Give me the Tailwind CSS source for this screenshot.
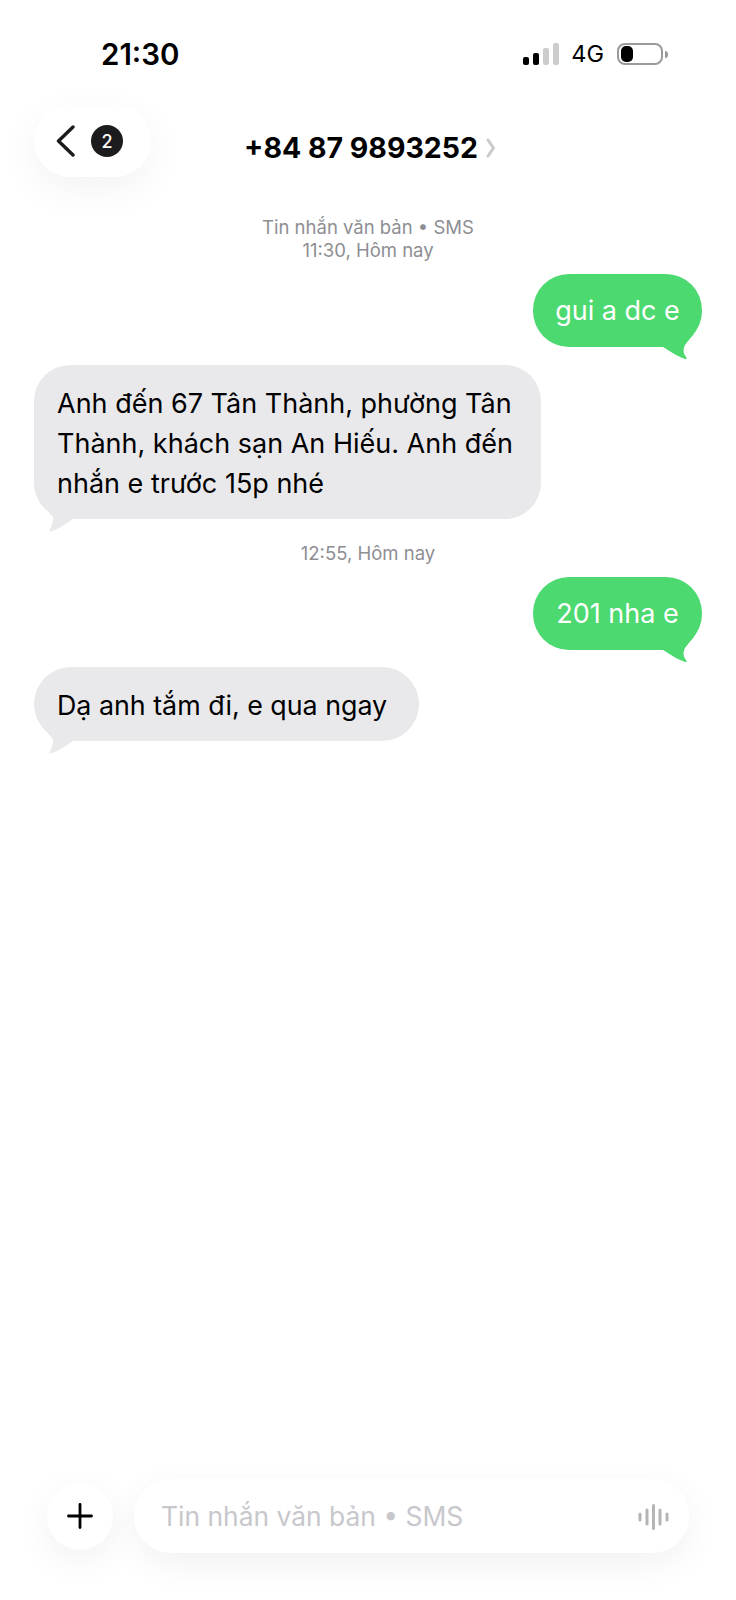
<!DOCTYPE html>
<html lang="vi">
<head>
    <meta charset="UTF-8">
    <meta name="viewport" content="width=device-width, initial-scale=1.0">
    <title>Tin nhắn</title>
    <script src="https://cdn.jsdelivr.net/npm/@tailwindcss/browser@4"></script>
</head>
<body class="bg-white font-['Inter','Noto_Sans',sans-serif] text-black">
<div class="flex h-[1600px] w-[736px] flex-col overflow-hidden bg-white">

    <!-- status bar -->
    <div class="flex h-[105px] items-start justify-between pl-[101px] pr-[68px] pt-[36px]">
        <span class="text-[29.500px] font-semibold leading-[36px]">21:30</span>
        <div class="flex h-[36px] items-center">
            <div class="flex items-end gap-[4px] pb-[1px]">
                <span class="h-[8px] w-[6px] rounded-[2px] bg-black"></span>
                <span class="h-[12px] w-[6px] rounded-[2px] bg-black"></span>
                <span class="h-[17px] w-[6px] rounded-[2px] bg-[#cccccc]"></span>
                <span class="h-[22px] w-[6px] rounded-[2px] bg-[#cccccc]"></span>
            </div>
            <span class="ml-[12px] text-[23.500px] leading-[36px]">4G</span>
            <div class="ml-[13px] flex h-[22px] w-[46px] items-center rounded-[8px] border-2 border-[#9a9a9a] pl-[2px]">
                <span class="h-[16px] w-[12px] rounded-[5px] bg-black"></span>
            </div>
            <span class="ml-[2px] h-[7px] w-[3px] rounded-r-[3px] bg-[#9a9a9a]"></span>
        </div>
    </div>

    <!-- nav -->
    <div class="grid h-[72px] grid-cols-[1fr_auto_1fr] items-start px-[34px]">
        <div class="flex h-[72px] w-[117px] items-center rounded-[36px] bg-white pl-[22px] shadow-[0_12px_40px_rgba(0,0,0,0.05)]">
            <svg class="h-[32px] w-[19px]" viewBox="0 0 19 32" fill="none" stroke="#1c1c1e" stroke-width="3.4" stroke-linecap="round" stroke-linejoin="round">
                <path d="M17 2 L2.5 16 L17 30"></path>
            </svg>
            <span class="ml-[16px] flex h-[32px] w-[32px] items-center justify-center rounded-full bg-[#1c1c1e] text-[18px] font-medium text-white">2</span>
        </div>
        <div class="flex items-center pl-[4px] pt-[25px]">
            <span class="text-[28.500px] font-bold leading-[36px]">+84 87 9893252</span>
            <svg class="ml-[8px] h-[20px] w-[10px]" viewBox="0 0 10 20" fill="none" stroke="#c9c9c9" stroke-width="3" stroke-linecap="round" stroke-linejoin="round">
                <path d="M2 2 L7.5 10 L2 18"></path>
            </svg>
        </div>
        <div></div>
    </div>

    <!-- messages -->
    <div class="flex flex-col px-[34px] pt-[39px]">
        <p class="text-center text-[18.500px] leading-[23px] text-[#8e8e93]">Tin nhắn văn bản • SMS<br>11:30, Hôm nay</p>

        <div class="relative mt-[12px] flex h-[73px] w-[169px] items-center justify-center self-end rounded-[36px] bg-[#4cd96f] pt-[2px] text-[27px] text-white">
            gui a dc e
            <svg class="absolute left-[128px] top-[60px] h-[27px] w-[36px]" viewBox="0 0 36 27" fill="#4cd96f">
                <path d="M2 13 C10 18 18 23 24 25 C26 25.500 26 24 25 23 C22 19 22 15 24 11 C27 7 30 3 33 0 L10 0 Z"></path>
            </svg>
        </div>

        <div class="relative mt-[18px] w-[507px] rounded-[36px] bg-[#e9e9eb] pb-[15px] pl-[23px] pt-[19px] text-[27px] leading-[40px]">
            <p>Anh đến 67 Tân Thành, phường Tân<br>Thành, khách sạn An Hiếu. Anh đến<br>nhắn e trước 15p nhé</p>
            <svg class="absolute left-[10px] top-[140px] h-[27px] w-[29px]" viewBox="0 0 29 27" fill="#e9e9eb">
                <path d="M0 0 C2 4 6 9 9 12 C9.500 16 8 21 5.500 25 C5 26.500 6.500 26.500 8 26 C15 24 23 18 29 14 L29 0 Z"></path>
            </svg>
        </div>

        <p class="mt-[23px] text-center text-[18.500px] leading-[23px] text-[#8e8e93]">12:55, Hôm nay</p>

        <div class="relative mt-[12px] flex h-[73px] w-[169px] items-center justify-center self-end rounded-[36px] bg-[#4cd96f] pt-[2px] text-[27px] text-white">
            201 nha e
            <svg class="absolute left-[128px] top-[60px] h-[27px] w-[36px]" viewBox="0 0 36 27" fill="#4cd96f">
                <path d="M2 13 C10 18 18 23 24 25 C26 25.500 26 24 25 23 C22 19 22 15 24 11 C27 7 30 3 33 0 L10 0 Z"></path>
            </svg>
        </div>

        <div class="relative mt-[17px] flex h-[74px] w-[385px] items-center rounded-[37px] bg-[#e9e9eb] pl-[23px] pt-[2px] text-[26.800px]">
            Dạ anh tắm đi, e qua ngay
            <svg class="absolute left-[10px] top-[60px] h-[27px] w-[29px]" viewBox="0 0 29 27" fill="#e9e9eb">
                <path d="M0 0 C2 4 6 9 9 12 C9.500 16 8 21 5.500 25 C5 26.500 6.500 26.500 8 26 C15 24 23 18 29 14 L29 0 Z"></path>
            </svg>
        </div>
    </div>

    <!-- composer -->
    <div class="mt-auto flex items-center gap-[21px] pb-[47px] pl-[47px] pr-[47px]">
        <div class="flex h-[67px] w-[66px] items-center justify-center rounded-full bg-white shadow-[0_10px_36px_rgba(0,0,0,0.06)]">
            <svg class="h-[26px] w-[26px]" viewBox="0 0 26 26" stroke="#000000" stroke-width="2.800" stroke-linecap="round">
                <path d="M13 1.500 V24.500 M1.500 13 H24.500"></path>
            </svg>
        </div>
        <div class="flex h-[74px] flex-1 items-center justify-between rounded-[37px] bg-white pl-[27px] pr-[20px] pt-[2px] shadow-[0_10px_36px_rgba(0,0,0,0.06)]">
            <span class="text-[26.400px] text-[#c7c7cc]">Tin nhắn văn bản • SMS</span>
            <svg class="h-[26px] w-[31px]" viewBox="0 0 31 26" stroke="#b5b5b5" stroke-width="3" stroke-linecap="round">
                <path d="M2 10 V16 M9 6 V20 M15.500 1.500 V24.500 M22 6 V20 M29 10 V16"></path>
            </svg>
        </div>
    </div>
</div>
</body>
</html>
